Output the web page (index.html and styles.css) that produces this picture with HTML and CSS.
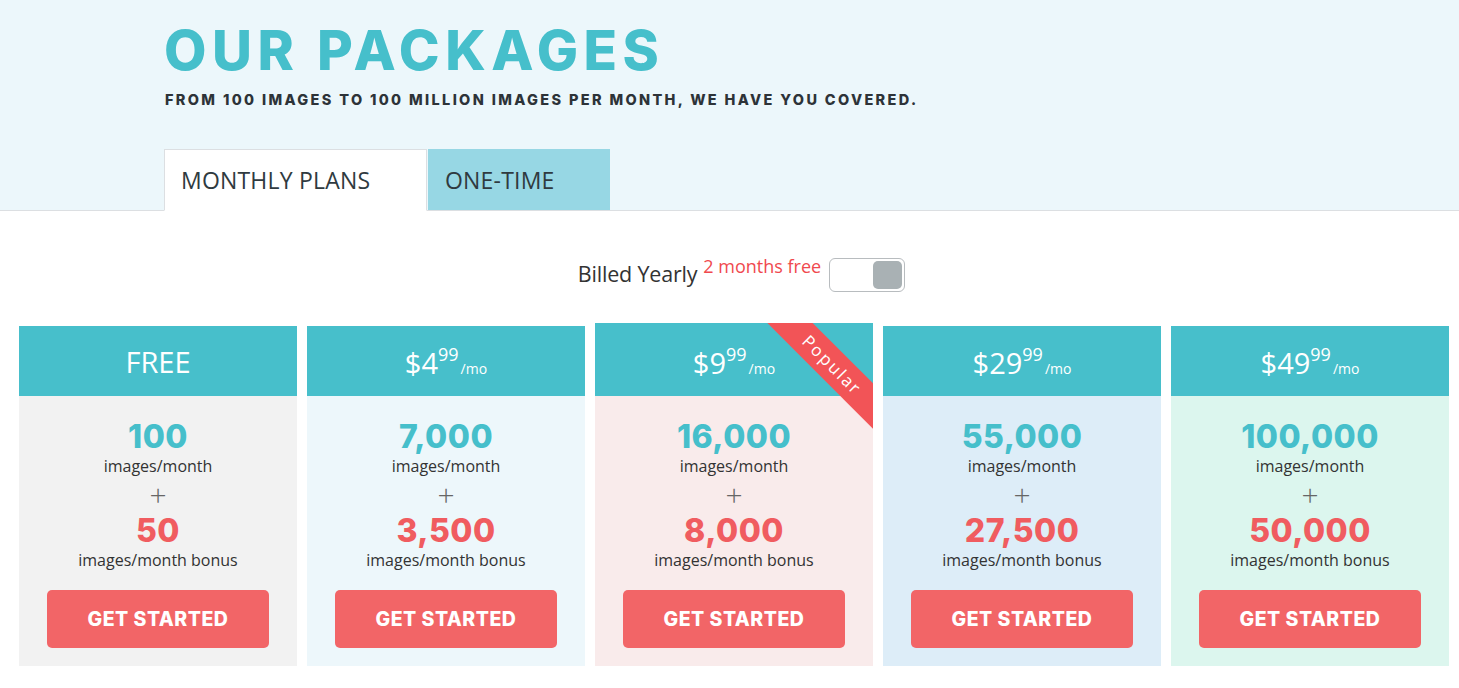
FILE: index.html
```html
<!DOCTYPE html>
<html>
<head>
<meta charset="utf-8">
<link rel="stylesheet" href="styles.css">
</head>
<body>
<header class="hero">
  <h1 class="title">OUR PACKAGES</h1>
  <p class="subtitle">FROM 100 IMAGES TO 100 MILLION IMAGES PER MONTH, WE HAVE YOU COVERED.</p>
  <nav class="tabs">
    <div class="tab tab-active">MONTHLY PLANS</div>
    <div class="tab tab-alt">ONE-TIME</div>
  </nav>
</header>

<section class="billing">
  <span class="billed">Billed Yearly</span>
  <span class="free">2 months free</span>
  <span class="toggle"><span class="knob"></span></span>
</section>

<section class="plans">
  <div class="card c-gray">
    <div class="card-head"><span class="free-label">FREE</span></div>
    <div class="card-body">
      <div class="num teal">100</div>
      <div class="unit">images/month</div>
      <div class="plus">+</div>
      <div class="num red">50</div>
      <div class="unit">images/month bonus</div>
      <a class="btn">GET STARTED</a>
    </div>
  </div>
  <div class="card c-blue">
    <div class="card-head"><span class="price">$4</span><sup class="cents">99</sup><span class="mo">/mo</span></div>
    <div class="card-body">
      <div class="num teal">7,000</div>
      <div class="unit">images/month</div>
      <div class="plus">+</div>
      <div class="num red">3,500</div>
      <div class="unit">images/month bonus</div>
      <a class="btn">GET STARTED</a>
    </div>
  </div>
  <div class="card c-pink popular">
    <div class="ribbon"><span>Popular</span></div>
    <div class="card-head"><span class="price">$9</span><sup class="cents">99</sup><span class="mo">/mo</span></div>
    <div class="card-body">
      <div class="num teal">16,000</div>
      <div class="unit">images/month</div>
      <div class="plus">+</div>
      <div class="num red">8,000</div>
      <div class="unit">images/month bonus</div>
      <a class="btn">GET STARTED</a>
    </div>
  </div>
  <div class="card c-sky">
    <div class="card-head"><span class="price">$29</span><sup class="cents">99</sup><span class="mo">/mo</span></div>
    <div class="card-body">
      <div class="num teal">55,000</div>
      <div class="unit">images/month</div>
      <div class="plus">+</div>
      <div class="num red">27,500</div>
      <div class="unit">images/month bonus</div>
      <a class="btn">GET STARTED</a>
    </div>
  </div>
  <div class="card c-mint">
    <div class="card-head"><span class="price">$49</span><sup class="cents">99</sup><span class="mo">/mo</span></div>
    <div class="card-body">
      <div class="num teal">100,000</div>
      <div class="unit">images/month</div>
      <div class="plus">+</div>
      <div class="num red">50,000</div>
      <div class="unit">images/month bonus</div>
      <a class="btn">GET STARTED</a>
    </div>
  </div>
</section>
</body>
</html>
```

FILE: styles.css
```css
* { box-sizing: border-box; }
html, body { margin: 0; padding: 0; background: #fff; }
body { font-family: "Open Sans", "Liberation Sans", sans-serif; color: #333; width: 1459px; height: 688px; overflow: hidden; }

.hero {
  background: #ecf7fb;
  height: 211px;
  padding: 20px 0 0 164px;
  border-bottom: 1px solid #dcdfe2;
  display: flex;
  flex-direction: column;
}
.title {
  margin: 0;
  font-family: "Inter", "Liberation Sans", sans-serif;
  font-weight: 800;
  font-size: 55px;
  line-height: 60px;
  letter-spacing: 5.5px;
  color: #46bfcb;
}
.subtitle {
  margin: 10px 0 0 1px;
  font-family: "Inter", "Liberation Sans", sans-serif;
  font-weight: 800;
  font-size: 14.5px;
  line-height: 20px;
  letter-spacing: 2.35px;
  color: #2d3338;
}
.tabs {
  margin-top: auto;
  display: flex;
  gap: 1px;
  margin-bottom: -1px;
}
.tab {
  height: 62px;
  display: flex;
  align-items: center;
  font-size: 23px;
  color: #2f3a40;
  font-weight: 400;
  letter-spacing: 0.2px;
}
.tab-active {
  width: 263px;
  padding-left: 16px;
  background: #fff;
  border: 1px solid #dcdfe2;
  border-bottom: 1px solid #fff;
}
.tab-alt {
  width: 182px;
  padding-left: 17px;
  background: #97d7e4;
  height: 61px;
}

.billing {
  display: flex;
  align-items: flex-start;
  justify-content: center;
  padding: 35px 0 0 24px;
  height: 112px;
}
.billed { font-size: 21.5px; color: #333; margin-top: 13px; letter-spacing: -0.2px; }
.free { font-size: 18px; color: #f0494e; margin-left: 6px; margin-top: 8px; }
.toggle {
  margin-left: 8px;
  margin-top: 12px;
  width: 76px;
  height: 34px;
  border: 1px solid #b8bcbf;
  border-radius: 6px;
  background: #fff;
  display: flex;
  justify-content: flex-end;
  padding: 2px;
}
.knob {
  width: 29px;
  height: 28px;
  border-radius: 5px;
  background: #a9b1b4;
}

.plans {
  display: flex;
  gap: 10px;
  padding-left: 19px;
  align-items: flex-end;
}
.card {
  width: 278px;
  height: 340px;
  display: flex;
  flex-direction: column;
  position: relative;
  overflow: hidden;
}
.card.popular { height: 343px; }
.card-head {
  background: #47bfcb;
  height: 70px;
  flex: none;
  display: flex;
  justify-content: center;
  align-items: baseline;
  padding-top: 18px;
  color: #fff;
  line-height: 1;
}
.popular .card-head { height: 73px; padding-top: 21px; }
.free-label { font-size: 29px; padding-top: 3px; }
.price { font-size: 29px; padding-top: 4px; }
.cents { font-size: 18px; position: relative; top: -13px; vertical-align: baseline; }
.mo { font-size: 14px; margin-left: 2px; }

.card-body {
  flex: 1;
  display: flex;
  flex-direction: column;
  align-items: center;
  padding-top: 23px;
}
.c-gray .card-body { background: #f2f2f2; }
.c-blue .card-body { background: #edf7fb; }
.c-pink .card-body { background: #f9ebeb; }
.c-sky .card-body { background: #ddedf8; }
.c-mint .card-body { background: #dcf6ee; }

.num {
  font-family: "Inter", "Liberation Sans", sans-serif;
  font-weight: 800;
  font-size: 32px;
  line-height: 36px;
  letter-spacing: 0.5px;
}
.teal { color: #46bfcb; }
.red { color: #f05c60; }
.unit { font-size: 16px; line-height: 22px; color: #333; }
.plus { font-size: 30px; line-height: 30px; color: #666; margin: 3px 0 3px; font-weight: 300; }
.btn {
  margin-top: 19px;
  width: 222px;
  height: 58px;
  background: #f26567;
  border-radius: 5px;
  color: #fff;
  display: flex;
  align-items: center;
  justify-content: center;
  font-family: "Inter", "Liberation Sans", sans-serif;
  font-weight: 800;
  font-size: 19.5px;
  letter-spacing: 0.5px;
}

.ribbon {
  position: absolute;
  top: 0;
  right: 0;
  width: 108px;
  height: 108px;
  overflow: hidden;
  z-index: 2;
}
.ribbon span {
  position: absolute;
  width: 180px;
  height: 32px;
  top: 25.5px;
  left: -23.5px;
  transform: rotate(45deg);
  background: #f25457;
  color: #fff;
  font-size: 17px;
  letter-spacing: 2px;
  text-align: center;
  line-height: 32px;
}
```
